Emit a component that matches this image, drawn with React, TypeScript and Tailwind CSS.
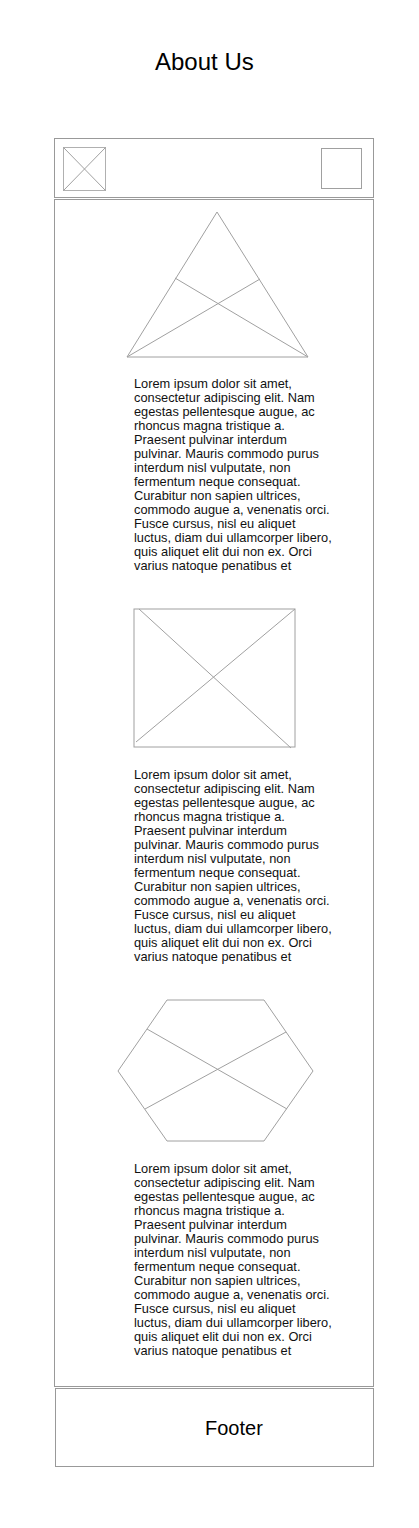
import type { ReactNode } from 'react';

const LOREM =
  'Lorem ipsum dolor sit amet, consectetur adipiscing elit. Nam egestas pellentesque augue, ac rhoncus magna tristique a. Praesent pulvinar interdum pulvinar. Mauris commodo purus interdum nisl vulputate, non fermentum neque consequat. Curabitur non sapien ultrices, commodo augue a, venenatis orci. Fusce cursus, nisl eu aliquet luctus, diam dui ullamcorper libero, quis aliquet elit dui non ex. Orci varius natoque penatibus et';

const stroke = '#a0a0a0';

const Paragraph = ({ className }: { className?: string }) => (
  <p
    className={`ml-[79px] w-[200px] text-[12.8px] leading-[14px] text-[#111111] ${className ?? ''}`}
  >
    {LOREM}
  </p>
);

const Shape = ({
  width,
  height,
  className,
  children,
}: {
  width: number;
  height: number;
  className?: string;
  children: ReactNode;
}) => (
  <svg
    width={width}
    height={height}
    viewBox={`0 0 ${width} ${height}`}
    className={`block ${className ?? ''}`}
    fill="none"
    stroke={stroke}
    strokeWidth={1}
  >
    {children}
  </svg>
);

export default function App() {
  return (
    <div
      className="w-[419px] min-h-[1528px] bg-white pb-[62px]"
      style={{ fontFamily: '"Liberation Sans", Arial, Helvetica, sans-serif' }}
    >
      <h1 className="pt-[48px] pl-[155px] text-[24px] leading-[28px] font-normal text-black">
        About Us
      </h1>

      <div className="mt-[62px] ml-[54px] w-[320px]">
        {/* top bar */}
        <div className="flex h-[60px] items-center justify-between border border-[#999999] pl-[8px] pr-[11px]">
          <Shape width={43} height={44} className="mt-[2px]">
            <rect x={0.5} y={0.5} width={42} height={43} stroke="#b0b0b0" />
            <line x1={0.5} y1={0.5} x2={42.5} y2={43.5} />
            <line x1={42.5} y1={0.5} x2={0.5} y2={43.5} />
          </Shape>
          <div className="mt-[1px] h-[41px] w-[41px] border border-[#a0a0a0]" />
        </div>

        {/* content */}
        <div className="mt-[1px] h-[1188px] border border-[#999999] pt-[11px]">
          <Shape width={183} height={147} className="ml-[71px]">
            <polygon points="91,1 1,146 182,146" />
            <line x1={49} y1={67} x2={182} y2={146} />
            <line x1={134} y1={68} x2={1} y2={146} />
          </Shape>
          <Paragraph className="mt-[19px]" />

          <Shape width={164} height={141} className="ml-[78px] mt-[35px]">
            <rect x={1} y={1} width={161} height={138} />
            <line x1={6} y1={1} x2={158} y2={140} />
            <line x1={162} y1={1} x2={3} y2={134} />
          </Shape>
          <Paragraph className="mt-[19px]" />

          <Shape width={198} height={144} className="ml-[62px] mt-[35px]">
            <polygon points="50,1 147,1 196,72 147,142 50,142 1,72" />
            <line x1={30} y1={30} x2={170} y2={110} />
            <line x1={169} y1={33} x2={28} y2={110} />
          </Shape>
          <Paragraph className="mt-[19px]" />
        </div>

        {/* footer */}
        <div className="ml-[1px] mt-[1px] flex h-[79px] items-center border border-[#999999] pl-[149px]">
          <span className="text-[20px] leading-[24px] text-black">Footer</span>
        </div>
      </div>
    </div>
  );
}
